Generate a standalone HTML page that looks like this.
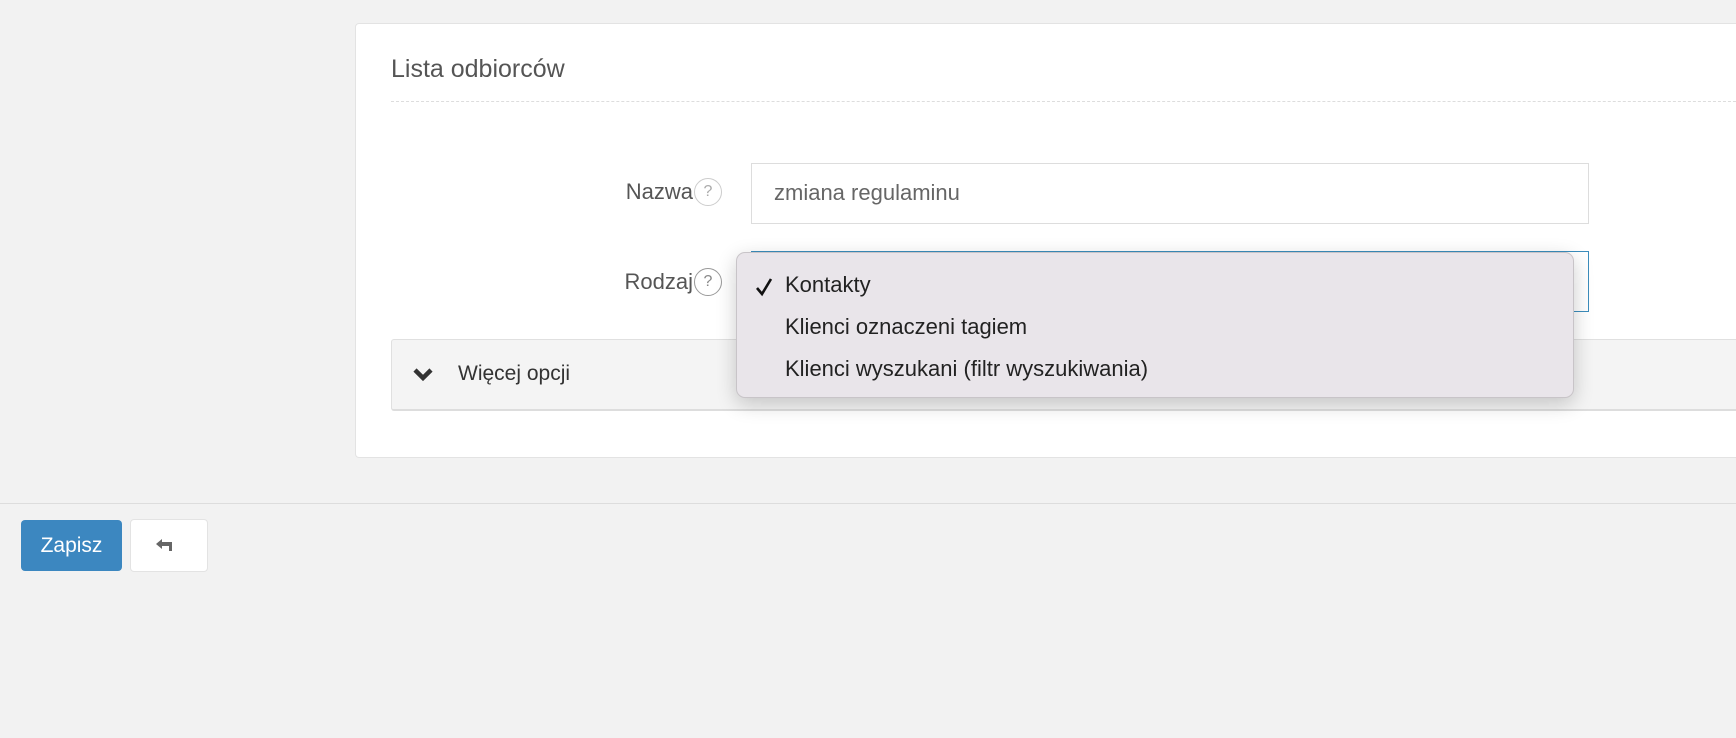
<!DOCTYPE html>
<html><head><meta charset="utf-8"><style>
*{box-sizing:border-box}
body{margin:0;width:1736px;height:738px;background:#f2f2f2;font-family:"Liberation Sans",sans-serif;position:relative;overflow:hidden;color:#555}
.card{position:absolute;left:355px;top:23px;width:1400px;height:435px;background:#fff;border:1px solid #e3e3e3;border-radius:4px}
.title{position:absolute;left:391px;top:55px;font-size:25px;color:#555}
.dash{position:absolute;left:391px;top:101px;width:1360px;border-top:1px dashed #ddd}
.lbl{position:absolute;right:1043px;font-size:22px;color:#555}
.help{position:absolute;width:28px;height:28px;border:1px solid #ccc;border-radius:50%;font-size:16px;color:#aaa;text-align:center;line-height:26px}
.inp{position:absolute;left:751px;top:163px;width:838px;height:61px;border:1px solid #ddd;font-size:22px;color:#666;padding:16px 22px}
.sel{position:absolute;left:751px;top:251px;width:838px;height:61px;border:1px solid #3c8dbc}
.more{position:absolute;left:391px;top:339px;width:1360px;height:72px;background:#f4f4f4;border:1px solid #e0e0e0;border-bottom:2px solid #ddd;border-radius:3px}
.more span{position:absolute;left:66px;top:22px;font-size:21px;color:#333}
.dd{position:absolute;left:736px;top:252px;width:838px;height:146px;background:#e9e5ea;border:1px solid #c8c4c8;border-radius:9px;box-shadow:0 6px 20px rgba(0,0,0,.2)}
.opt{position:absolute;left:48px;font-size:22px;color:#222}
.line{position:absolute;left:0;top:503px;width:1736px;border-top:1px solid #ddd}
.btn1{position:absolute;left:21px;top:520px;width:101px;height:51px;background:#3c87c0;border-radius:4px;color:#fff;font-size:21px;text-align:center;line-height:51px}
.btn2{position:absolute;left:130px;top:519px;width:78px;height:53px;background:#fff;border:1px solid #e3e3e3;border-radius:4px}
</style></head><body>
<div class="card"></div>
<div class="title">Lista odbiorców</div>
<div class="dash"></div>
<div class="lbl" style="top:179px">Nazwa</div>
<div class="help" style="left:694px;top:178px">?</div>
<div class="inp">zmiana regulaminu</div>
<div class="lbl" style="top:269px">Rodzaj</div>
<div class="help" style="left:694px;top:268px;border-color:#999;color:#888">?</div>
<div class="sel"></div>
<div class="more"><svg style="position:absolute;left:20px;top:26px" width="22" height="18" viewBox="0 0 22 18"><path d="M3 4l8 8 8-8" stroke="#333" stroke-width="4.5" fill="none"/></svg><span>Więcej opcji</span></div>
<div class="dd">
<svg style="position:absolute;left:18px;top:24px" width="18" height="20" viewBox="0 0 18 20"><path d="M2 11l5 6L16 2" stroke="#111" stroke-width="2.6" fill="none"/></svg>
<div class="opt" style="top:19px">Kontakty</div>
<div class="opt" style="top:61px">Klienci oznaczeni tagiem</div>
<div class="opt" style="top:103px">Klienci wyszukani (filtr wyszukiwania)</div>
</div>
<div class="line"></div>
<div class="btn1">Zapisz</div>
<div class="btn2"><svg style="position:absolute;left:24px;top:18px" width="20" height="16" viewBox="0 0 20 16"><path d="M1 6l6-5v3h10v9h-3V8H7v3z" fill="#666"/></svg></div>
</body></html>
